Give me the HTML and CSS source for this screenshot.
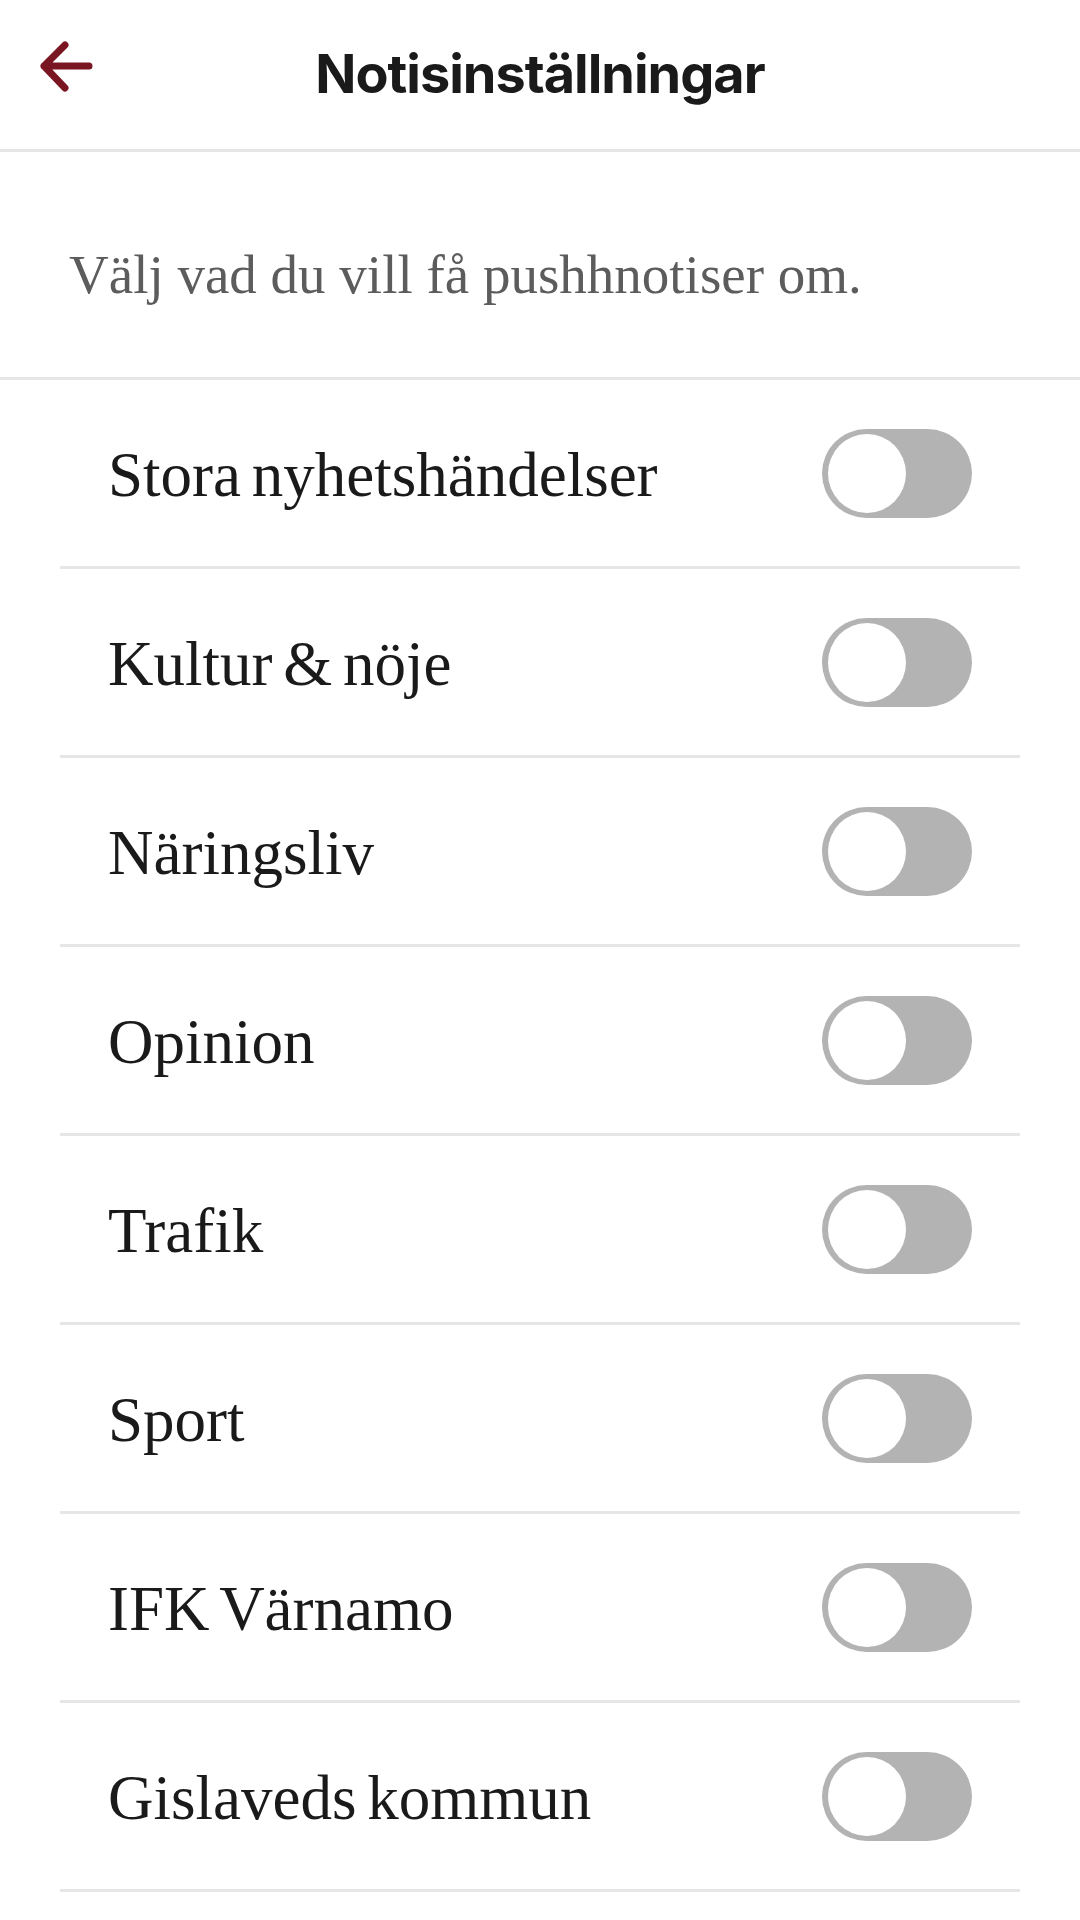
FILE: index.html
```html
<!DOCTYPE html>
<html lang="sv">
<head>
    <meta charset="UTF-8">
    <meta name="viewport" content="width=device-width, initial-scale=1.0">
    <title>Notisinställningar</title>
    <link rel="stylesheet" href="styles.css">
</head>
<body>
    <div class="topbar">
        <button class="back" type="button" aria-label="Tillbaka">
            <svg width="60" height="60" viewBox="0 0 60 60">
                <path d="M8 30 H53 M29 9 L8 30 L29 52" fill="none" stroke="#7a1522" stroke-width="7" stroke-linecap="round" stroke-linejoin="round"/>
            </svg>
        </button>
        <h1 class="rubrik">Notisinställningar</h1>
        <div></div>
    </div>

    <p class="intro">Välj vad du vill få pushhnotiser om.</p>

    <div class="lista">
        <div class="rad"><span class="namn">Stora nyhetshändelser</span><label class="brytare"><input type="checkbox"><span class="spar"></span></label></div>
        <div class="rad"><span class="namn">Kultur &amp; nöje</span><label class="brytare"><input type="checkbox"><span class="spar"></span></label></div>
        <div class="rad"><span class="namn">Näringsliv</span><label class="brytare"><input type="checkbox"><span class="spar"></span></label></div>
        <div class="rad"><span class="namn">Opinion</span><label class="brytare"><input type="checkbox"><span class="spar"></span></label></div>
        <div class="rad"><span class="namn">Trafik</span><label class="brytare"><input type="checkbox"><span class="spar"></span></label></div>
        <div class="rad"><span class="namn">Sport</span><label class="brytare"><input type="checkbox"><span class="spar"></span></label></div>
        <div class="rad"><span class="namn">IFK Värnamo</span><label class="brytare"><input type="checkbox"><span class="spar"></span></label></div>
        <div class="rad"><span class="namn">Gislaveds kommun</span><label class="brytare"><input type="checkbox"><span class="spar"></span></label></div>
    </div>
</body>
</html>
```

FILE: styles.css
```css
body{
    margin:0;
    background:#fff;
    color:#1a1a1a;
}
.topbar{
    height:149px;
    display:grid;
    grid-template-columns:1fr auto 1fr;
    align-items:center;
    border-bottom:3px solid #e6e6e6;
}
.back{
    align-self:start;
    justify-self:start;
    margin:36px 0 0 36px;
    padding:0;
    border:0;
    background:none;
    width:60px;
    height:60px;
}
.back svg{
    display:block;
}
.rubrik{
    margin:0;
    font-family:Inter, "Noto Sans", sans-serif;
    font-weight:700;
    font-size:54px;
    letter-spacing:-1px;
    line-height:1.2;
    color:#1a1a1a;
}
.intro{
    margin:0;
    height:228px;
    box-sizing:border-box;
    padding:90px 0 0 69px;
    font-family:"Liberation Serif", serif;
    font-size:55px;
    line-height:1.2;
    color:#5c5c5c;
    border-bottom:3px solid #e6e6e6;
}
.lista{
    margin:0 60px;
}
.rad{
    height:186px;
    padding:0 48px;
    display:flex;
    align-items:center;
    justify-content:space-between;
    border-bottom:3px solid #e6e6e6;
}
.namn{
    padding-top:4px;
    font-family:"Liberation Serif", serif;
    font-size:63px;
    word-spacing:-5px;
    color:#1a1a1a;
}
.brytare{
    position:relative;
    width:150px;
    height:89px;
}
.brytare input{
    display:none;
}
.spar{
    display:block;
    width:150px;
    height:89px;
    border-radius:45px;
    background:#b3b3b3;
}
.spar::after{
    content:"";
    position:absolute;
    left:6px;
    top:5px;
    width:78px;
    height:79px;
    border-radius:50%;
    background:#fff;
}
```
